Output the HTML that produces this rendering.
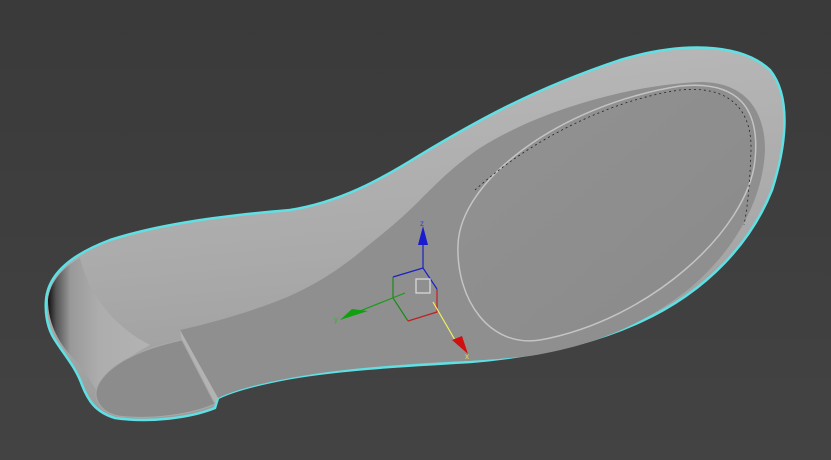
<!DOCTYPE html>
<html><head><meta charset="utf-8"><style>
html,body{margin:0;padding:0;width:831px;height:460px;overflow:hidden;background:#3f3f3f}
svg{display:block}
</style></head><body>
<svg width="831" height="460" viewBox="0 0 831 460" xmlns="http://www.w3.org/2000/svg">
<defs>
<linearGradient id="bg" x1="0" y1="0" x2="0" y2="1">
<stop offset="0" stop-color="#3a3a3a"/><stop offset="1" stop-color="#434343"/>
</linearGradient>
<linearGradient id="wall" x1="0" y1="0" x2="0.2" y2="1">
<stop offset="0" stop-color="#bbbbbb"/><stop offset="0.6" stop-color="#aaaaaa"/><stop offset="1" stop-color="#9c9c9c"/>
</linearGradient>
<linearGradient id="heel" x1="0" y1="0" x2="1" y2="0">
<stop offset="0" stop-color="#111"/><stop offset="0.08" stop-color="#555"/><stop offset="0.22" stop-color="#999"/><stop offset="0.5" stop-color="#adadad"/><stop offset="1" stop-color="#b3b3b3"/>
</linearGradient>
<linearGradient id="oval" x1="0" y1="0" x2="1" y2="1">
<stop offset="0" stop-color="#929292"/><stop offset="1" stop-color="#8a8a8a"/>
</linearGradient>
</defs>
<rect width="831" height="460" fill="url(#bg)"/>
<path d="M46,300 C48,275 70,255 110,240 C160,224 220,216 290,210 C340,202 380,180 420,155 C470,125 530,90 620,60 C680,42 740,42 770,70 C790,95 788,140 772,190 C752,240 710,290 640,322 C590,345 530,357 470,362 C400,366 330,370 280,380 C250,386 230,392 218,398 L215,408 C190,418 150,423 115,418 C95,412 88,400 82,385 C75,365 60,350 52,335 C47,325 45,312 46,300 Z" fill="url(#wall)" stroke="#5fe0e4" stroke-width="2.5"/>
<path d="M48,300 C50,282 62,268 80,258 C90,300 120,330 150,345 C125,358 105,375 100,395 C92,385 85,370 75,360 C60,345 48,325 48,300 Z" fill="url(#heel)"/>
<path d="M180,330 C215,322 250,312 285,298 C320,283 345,265 365,248 C385,232 400,220 420,200 C440,180 455,165 480,148 C540,110 630,85 700,82 C745,82 765,110 765,150 C763,200 735,250 690,288 C650,320 600,345 530,356 C490,360 470,361 440,362 C380,366 330,370 280,380 C255,385 235,390 218,398 L180,330 Z" fill="#8f8f8f"/>
<path d="M180,330 L218,398 L214,404 L204,392 L182,343 Z" fill="#b3b3b3"/>
<path d="M182,340 L215,404 C190,415 150,420 118,416 C100,412 92,398 98,385 C110,362 145,348 182,340 Z" fill="#8c8c8c" stroke="#a8a8a8" stroke-width="1"/>
<path d="M458,245 C460,180 560,105 680,86 C740,80 760,110 755,160 C748,230 650,320 540,340 C490,348 456,300 458,245 Z" fill="url(#oval)" stroke="#c4c4c4" stroke-width="1.5"/>
<path d="M475,190 C530,140 610,100 680,90 C730,85 752,110 751,150 C750,180 748,205 744,225" fill="none" stroke="#222" stroke-width="0.8" stroke-dasharray="2 3"/>
<g stroke-width="1.2" fill="none">
<line x1="423" y1="268" x2="423" y2="240" stroke="#1a22c0"/>
<path d="M393,277 L423,268 L437,289" stroke="#1a22c0"/>
<path d="M393,277 L393,298 L408,321" stroke="#1a8a1a"/>
<path d="M408,321 L437,312 L437,289" stroke="#c02020"/>
<line x1="405" y1="293" x2="355" y2="313" stroke="#1a9a1a"/>
<line x1="433" y1="302" x2="455" y2="340" stroke="#f0f060"/>
</g>
<rect x="416" y="279" width="14" height="14" fill="none" stroke="#ddd" stroke-width="1.2"/>
<path d="M418,245 L423,226 L428,245 Z" fill="#1a1ad0"/>
<path d="M352,309 L368,311 L340,320 Z" fill="#10a010"/>
<path d="M452,340 L462,336 L468,354 Z" fill="#d01010"/>
<text x="420" y="226" font-family="Liberation Sans, sans-serif" font-size="8" fill="#3040e0">z</text>
<text x="334" y="322" font-family="Liberation Sans, sans-serif" font-size="8" fill="#20c020">y</text>
<text x="465" y="359" font-family="Liberation Sans, sans-serif" font-size="8" fill="#e0e040">x</text>
</svg>
</body></html>
